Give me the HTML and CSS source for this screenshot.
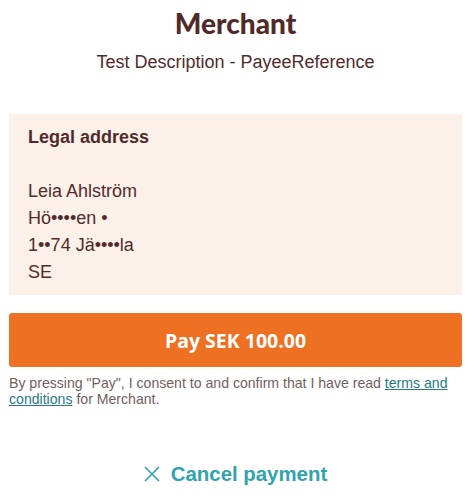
FILE: index.html
```html
<!DOCTYPE html>
<html lang="en">
<head>
<meta charset="utf-8">
<title>Payment</title>
<link rel="stylesheet" href="styles.css">
</head>
<body>
<main class="page">
  <header class="head">
    <h1 class="merchant">Merchant</h1>
    <p class="desc">Test Description - PayeeReference</p>
  </header>
  <section class="address">
    <h2 class="address-title">Legal address</h2>
    <p class="address-lines">Leia Ahlström<br>Hö••••en •<br>1••74 Jä••••la<br>SE</p>
  </section>
  <button class="pay" type="button">Pay SEK 100.00</button>
  <p class="consent">By pressing "Pay", I consent to and confirm that I have read <a href="#" class="link">terms and conditions</a> for Merchant.</p>
  <div class="cancel-row">
    <a href="#" class="cancel">
      <svg class="cancel-icon" width="16" height="16" viewBox="0 0 16 16" aria-hidden="true"><path d="M1 1 L15 15 M15 1 L1 15" stroke="#31a3ae" stroke-width="1.6" fill="none"/></svg>
      <span>Cancel payment</span>
    </a>
  </div>
</main>
</body>
</html>
```

FILE: styles.css
```css
html, body {
  margin: 0;
  padding: 0;
  background: #ffffff;
}
body {
  font-family: "Liberation Sans", Arial, sans-serif;
  color: #512b2b;
}
.page {
  padding: 0 13px 0 9px;
  display: flex;
  flex-direction: column;
}
.head {
  text-align: center;
}
.merchant {
  font-family: Lato, "Open Sans", sans-serif;
  font-weight: 900;
  font-size: 28px;
  line-height: 34px;
  margin: 6px 0 0;
  color: #512b2b;
}
.desc {
  font-size: 18px;
  line-height: 27px;
  margin: 9px 0 0;
}
.address {
  background: #fbf1e8;
  margin-top: 38px;
  padding: 10px 19px 9px;
}
.address-title {
  font-size: 18px;
  font-weight: 700;
  line-height: 27px;
  margin: 0 0 27px;
}
.address-lines {
  font-size: 18px;
  line-height: 27px;
  margin: 0;
}
.pay {
  margin-top: 18px;
  height: 54px;
  border: none;
  border-radius: 3px;
  background: #ee7023;
  color: #ffffff;
  font-family: "Open Sans", "Liberation Sans", sans-serif;
  font-weight: 700;
  font-size: 19.5px;
  cursor: pointer;
}
.consent {
  font-size: 14.1px;
  line-height: 16px;
  color: #72605e;
  margin: 8px 0 0;
}
.link {
  color: #257886;
  text-decoration: underline;
}
.cancel-row {
  display: flex;
  justify-content: center;
  margin-top: 55px;
}
.cancel {
  display: flex;
  align-items: center;
  gap: 11px;
  color: #31a3ae;
  font-weight: 700;
  font-size: 20.4px;
  line-height: 24px;
  text-decoration: none;
}
.cancel-icon {
  display: block;
}
```
